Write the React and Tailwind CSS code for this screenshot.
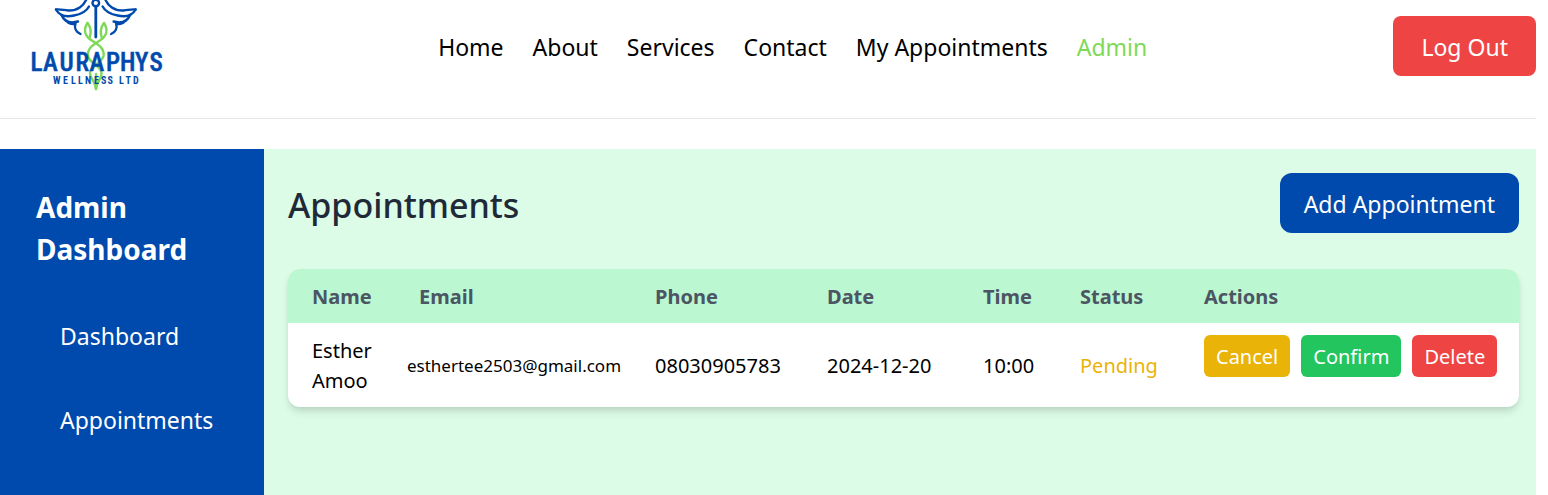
const navLinks = ['Home', 'About', 'Services', 'Contact', 'My Appointments', 'Admin'];

const columns = [
  { label: 'Name', width: 'w-[107px]' },
  { label: 'Email', width: 'w-[236px]' },
  { label: 'Phone', width: 'w-[172px]' },
  { label: 'Date', width: 'w-[156px]' },
  { label: 'Time', width: 'w-[97px]' },
  { label: 'Status', width: 'w-[124px]' },
  { label: 'Actions', width: '' },
];

const appointments = [
  {
    name: 'Esther Amoo',
    email: 'esthertee2503@gmail.com',
    phone: '08030905783',
    date: '2024-12-20',
    time: '10:00',
    status: 'Pending',
  },
];

function Wing() {
  return (
    <g>
      <path d="M87 -2 C84 6 77 11 68 10.500 C63 10 60 9 56 9.500" />
      <path d="M56 9.500 C59 15 65 17.500 74 15.500 C80 14.500 86 12 89 6.500" />
      <path d="M61.500 15 C64 21 69 24 78 21.500" />
      <path d="M68 22.500 C71 24.500 74 24 75.500 23.500 C74 28 76 32 80.500 34" />
    </g>
  );
}

function Logo() {
  return (
    <svg className="block h-[94px] w-48 shrink-0" viewBox="0 0 192 94" role="img" aria-label="Lauraphys Wellness Ltd">
      <g fill="none" stroke="#004aad" strokeWidth="2.400" strokeLinecap="round" strokeLinejoin="round">
        <Wing />
        <g transform="translate(191.600 0) scale(-1 1)">
          <Wing />
        </g>
        <circle cx="95.800" cy="3" r="3.300" />
        <path d="M95.800 7 V37" strokeWidth="2.800" />
      </g>
      <g fill="none" stroke="#7ed957" strokeWidth="2.400" strokeLinecap="round">
        <path d="M87.500 23 C83 30 85 36 91 40 C97 44 105 48 103.500 56 C102 63 90 66 90 73 C90 79 95 80 96 89" />
        <path d="M104 23 C108.500 30 106.500 36 100.500 40 C94 44 87 48 88 56 C89 63 101 66 101.500 73 C102 79 97 80 96 89" />
        <path d="M87.500 23 C91.500 28 91 34 89.500 38" />
        <path d="M104 23 C100 28 100.500 34 102 38" />
        <path d="M96 74 V88" />
      </g>
      <g fill="#004aad" className="font-['Roboto_Condensed','Liberation_Sans_Narrow','Liberation_Sans',sans-serif] font-bold">
        <text x="30.500 43 59.500 75.500 89.500 106 120 135 149.500" y="71" fontSize="25" className="font-medium" stroke="#004aad" strokeWidth="0.500">
          LAURAPHYS
        </text>
        <text x="53 63 71 78 85 94 101 107.500 119 125.500 133" y="83.500" fontSize="10">
          WELLNESSLTD
        </text>
      </g>
    </svg>
  );
}

function Header() {
  return (
    <header className="mb-[30px] flex h-[119px] items-start justify-between border-b border-gray-200">
      <Logo />
      <nav className="flex h-[94px] items-center gap-[29px]">
        {navLinks.map((label) => (
          <a
            key={label}
            href="#"
            className={label === 'Admin' ? 'whitespace-nowrap text-[#7ed957]' : 'whitespace-nowrap text-black'}
          >
            {label}
          </a>
        ))}
      </nav>
      <button type="button" className="mt-4 h-[60px] rounded-lg bg-[#ef4444] px-7 pt-0.5 text-white">
        Log Out
      </button>
    </header>
  );
}

function Sidebar() {
  return (
    <aside className="w-[264px] shrink-0 bg-[#004aad] px-9 pt-[37px] pb-9 text-white">
      <h2 className="text-[28px] leading-[42px] font-bold">Admin Dashboard</h2>
      <nav className="mt-9 flex flex-col gap-6 px-6">
        <a href="#" className="py-3">Dashboard</a>
        <a href="#" className="py-3">Appointments</a>
      </nav>
    </aside>
  );
}

function AppointmentsTable() {
  return (
    <div className="mt-9 overflow-hidden rounded-xl bg-white shadow-[0_6px_9px_-1px_rgba(0,0,0,0.1),0_3px_6px_-2px_rgba(0,0,0,0.1)]">
      <table className="w-full table-fixed text-left text-[20px] leading-[30px]">
        <thead className="bg-[#bbf7d0] text-[#4b5563]">
          <tr>
            {columns.map(({ label, width }) => (
              <th key={label} scope="col" className={`${width} px-6 pt-[13px] pb-[11px] font-bold`}>
                {label}
              </th>
            ))}
          </tr>
        </thead>
        <tbody>
          {appointments.map((item) => (
            <tr key={item.phone}>
              <td className="px-6 pt-[13px] pb-[11px]">{item.name}</td>
              <td className="px-3 pt-[13px] pb-[11px] text-[17px]">{item.email}</td>
              <td className="px-6 pt-[13px] pb-[11px]">{item.phone}</td>
              <td className="px-6 pt-[13px] pb-[11px] whitespace-nowrap">{item.date}</td>
              <td className="px-6 pt-[13px] pb-[11px]">{item.time}</td>
              <td className="px-6 pt-[13px] pb-[11px] text-[#eab308]">{item.status}</td>
              <td className="px-6 py-3 align-top">
                <div className="flex gap-[11px] text-white">
                  <button type="button" className="rounded-md bg-[#eab308] px-3 pt-[7px] pb-[5px]">Cancel</button>
                  <button type="button" className="rounded-md bg-[#22c55e] px-3 pt-[7px] pb-[5px]">Confirm</button>
                  <button type="button" className="rounded-md bg-[#ef4444] px-3 pt-[7px] pb-[5px]">Delete</button>
                </div>
              </td>
            </tr>
          ))}
        </tbody>
      </table>
    </div>
  );
}

export default function App() {
  return (
    <div className="flex min-h-screen flex-col bg-white pr-3 font-['Noto_Sans',sans-serif] text-[23px] leading-[36px] text-black">
      <Header />
      <div className="flex flex-1">
        <Sidebar />
        <main className="min-w-0 flex-1 bg-[#dcfce7] py-6 pr-[17px] pl-6">
          <div className="flex items-center justify-between">
            <h1 className="pt-1 text-[34px] leading-[48px] font-medium text-[#1f2937]">Appointments</h1>
            <button type="button" className="h-[60px] rounded-xl bg-[#004aad] px-6 pt-0.5 text-white">
              Add Appointment
            </button>
          </div>
          <AppointmentsTable />
        </main>
      </div>
    </div>
  );
}
